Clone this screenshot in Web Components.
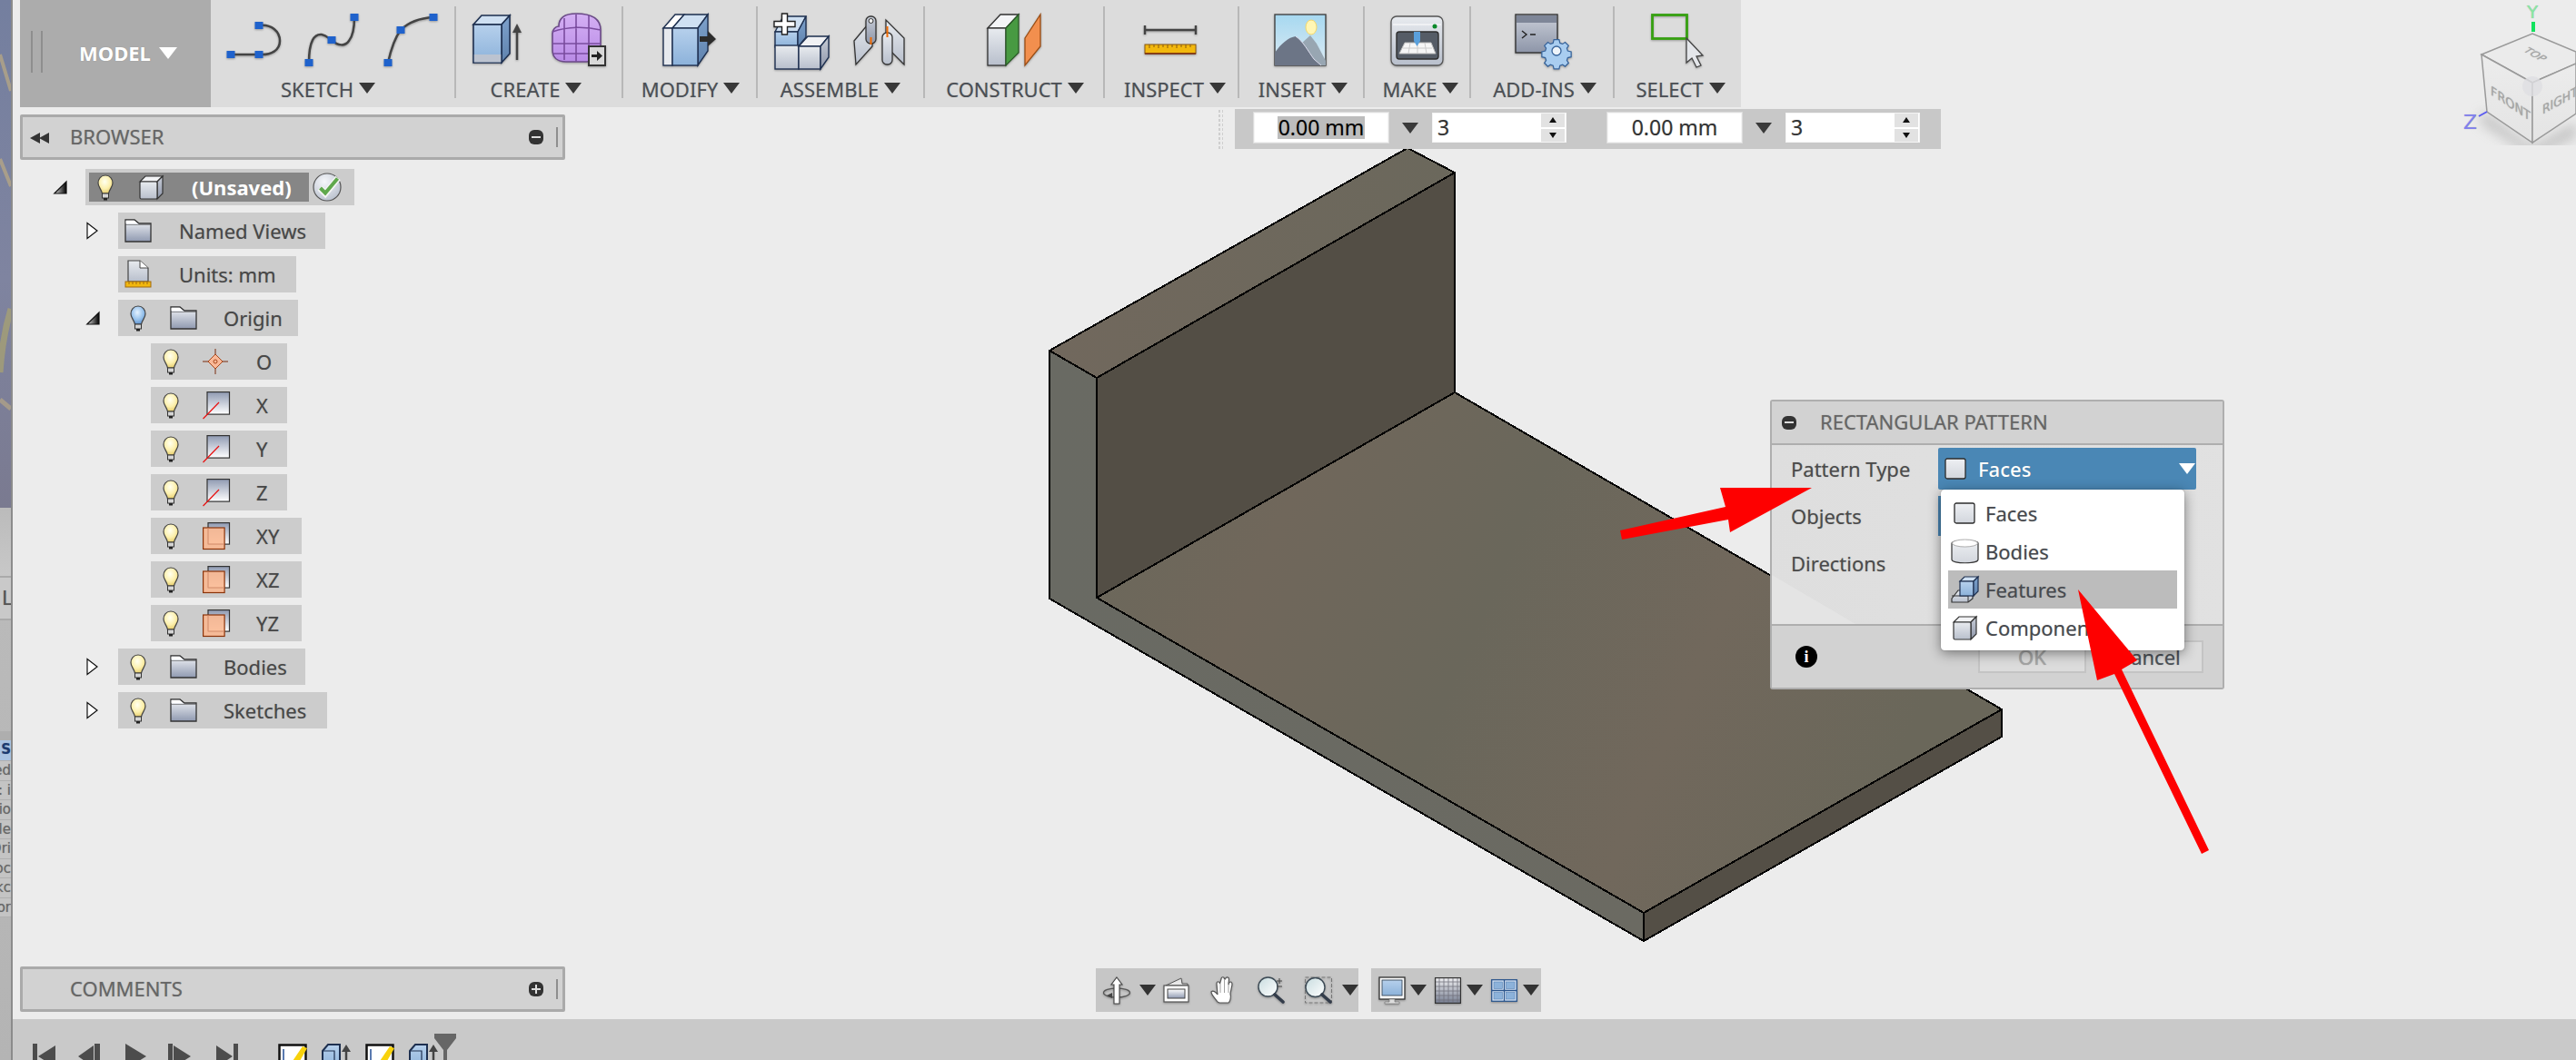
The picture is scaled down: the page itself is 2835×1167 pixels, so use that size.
<!DOCTYPE html>
<html>
<head>
<meta charset="utf-8">
<title>Rectangular pattern</title>
<style>
html, body { margin: 0; height: 100%; background: #ececec; overflow: hidden; }
</style>
</head>
<body>
<fx-app>
  <desktop-strip slot="strip"></desktop-strip>
  <fx-toolbar slot="toolbar">
    <model-switch></model-switch>
    <tool-group label="SKETCH" width="268" shift="-5">
      <fx-icon name="skLine"></fx-icon><fx-icon name="skSpline"></fx-icon><fx-icon name="skArc"></fx-icon>
    </tool-group>
    <tool-sep></tool-sep>
    <tool-group label="CREATE" width="182" shift="-3">
      <fx-icon name="extrude"></fx-icon><fx-icon name="form"></fx-icon>
    </tool-group>
    <tool-sep></tool-sep>
    <tool-group label="MODIFY" width="146" shift="1"><fx-icon name="press"></fx-icon></tool-group>
    <tool-sep></tool-sep>
    <tool-group label="ASSEMBLE" width="182">
      <fx-icon name="newComp"></fx-icon><fx-icon name="joint"></fx-icon>
    </tool-group>
    <tool-sep></tool-sep>
    <tool-group label="CONSTRUCT" width="196" shift="1"><fx-icon name="construct"></fx-icon></tool-group>
    <tool-sep></tool-sep>
    <tool-group label="INSPECT" width="146" shift="4"><fx-icon name="inspect"></fx-icon></tool-group>
    <tool-sep></tool-sep>
    <tool-group label="INSERT" width="136" shift="2"><fx-icon name="insert"></fx-icon></tool-group>
    <tool-sep></tool-sep>
    <tool-group label="MAKE" width="115" shift="4"><fx-icon name="make"></fx-icon></tool-group>
    <tool-sep></tool-sep>
    <tool-group label="ADD-INS" width="156" shift="3"><fx-icon name="addins"></fx-icon></tool-group>
    <tool-sep></tool-sep>
    <tool-group label="SELECT" width="139" shift="3"><fx-icon name="select"></fx-icon></tool-group>
  </fx-toolbar>

  <model-view slot="canvas"></model-view>
  <sketch-bar slot="canvas"></sketch-bar>
  <nav-bar slot="canvas"></nav-bar>
  <pattern-dialog slot="canvas"></pattern-dialog>
  <red-arrows slot="canvas"></red-arrows>

  <side-panel slot="browser" title="BROWSER" kind="collapse">
    <tree-row level="0" expander="open" bulb="yellow" icon="cube" text="(Unsaved)" width="296" root></tree-row>
    <tree-row level="1" expander="closed" icon="folder" text="Named Views" width="228"></tree-row>
    <tree-row level="1" icon="units" text="Units: mm" width="196"></tree-row>
    <tree-row level="1" expander="open" bulb="blue" icon="folder" text="Origin" width="198"></tree-row>
    <tree-row level="2" bulb="yellow" icon="point" text="O" width="150"></tree-row>
    <tree-row level="2" bulb="yellow" icon="axis" text="X" width="150"></tree-row>
    <tree-row level="2" bulb="yellow" icon="axis" text="Y" width="150"></tree-row>
    <tree-row level="2" bulb="yellow" icon="axis" text="Z" width="150"></tree-row>
    <tree-row level="2" bulb="yellow" icon="plane" text="XY" width="166"></tree-row>
    <tree-row level="2" bulb="yellow" icon="plane" text="XZ" width="166"></tree-row>
    <tree-row level="2" bulb="yellow" icon="plane" text="YZ" width="166"></tree-row>
    <tree-row level="1" expander="closed" bulb="yellow" icon="folder" text="Bodies" width="206"></tree-row>
    <tree-row level="1" expander="closed" bulb="yellow" icon="folder" text="Sketches" width="230"></tree-row>
  </side-panel>
  <side-panel slot="comments" title="COMMENTS" kind="expand"></side-panel>

  <time-line slot="timeline"></time-line>
  <view-cube slot="cube"></view-cube>
</fx-app>

<script>
const FONT = `"Noto Sans", "DejaVu Sans", sans-serif`

const DEFS = /* svg */ `<defs>
<linearGradient id="blue" x1="0" y1="0" x2="0" y2="1"><stop offset="0" stop-color="#b6d0ec"/><stop offset="1" stop-color="#8cb2da"/></linearGradient>
<linearGradient id="blueSide" x1="0" y1="0" x2="0" y2="1"><stop offset="0" stop-color="#7ea2cc"/><stop offset="1" stop-color="#5f82ad"/></linearGradient>
<linearGradient id="steel" x1="0" y1="0" x2="0" y2="1"><stop offset="0" stop-color="#e8ebef"/><stop offset="1" stop-color="#b8bfcc"/></linearGradient>
<linearGradient id="steelSide" x1="0" y1="0" x2="0" y2="1"><stop offset="0" stop-color="#c9ced8"/><stop offset="1" stop-color="#8d95a8"/></linearGradient>
<linearGradient id="pale" x1="0" y1="0" x2="0" y2="1"><stop offset="0" stop-color="#eef0f3"/><stop offset="1" stop-color="#d2d6dd"/></linearGradient>
<linearGradient id="folder" x1="0" y1="0" x2="0" y2="1"><stop offset="0" stop-color="#f2f4f7"/><stop offset="1" stop-color="#8f99b0"/></linearGradient>
<linearGradient id="plane" x1="0" y1="0" x2="0" y2="1"><stop offset="0" stop-color="#8f9ab2"/><stop offset="1" stop-color="#ffffff"/></linearGradient>
<linearGradient id="gridFill" x1="0" y1="0" x2="0" y2="1"><stop offset="0" stop-color="#f0f0f2"/><stop offset="1" stop-color="#777f92"/></linearGradient>
<linearGradient id="sky" x1="0" y1="0" x2="0" y2="1"><stop offset="0" stop-color="#a6d8f0"/><stop offset="1" stop-color="#dcebf4"/></linearGradient>
<linearGradient id="mag" x1="0" y1="0" x2="1" y2="1"><stop offset="0" stop-color="#c8dcdf"/><stop offset="1" stop-color="#ffffff"/></linearGradient>
<linearGradient id="purple" x1="0" y1="0" x2="0" y2="1"><stop offset="0" stop-color="#d4b0f4"/><stop offset="1" stop-color="#b98ae6"/></linearGradient>
<radialGradient id="bulb" cx=".45" cy=".35" r=".65"><stop offset="0" stop-color="#fffff0"/><stop offset=".6" stop-color="#fcf0ae"/><stop offset="1" stop-color="#e6cd6e"/></radialGradient>
<radialGradient id="bulbBlue" cx=".45" cy=".35" r=".65"><stop offset="0" stop-color="#e4f2ff"/><stop offset=".6" stop-color="#99c3ec"/><stop offset="1" stop-color="#5f93cf"/></radialGradient>
<radialGradient id="disc" cx=".4" cy=".3" r=".8"><stop offset="0" stop-color="#f6f7fa"/><stop offset="1" stop-color="#b4bcca"/></radialGradient>
</defs>`

const bulbBody = fill => `<path d="M9 1C4 1 1 5 1 9.5 1 13.5 4 15.5 5.5 21h7C14 15.5 17 13.5 17 9.5 17 5 14 1 9 1z" fill="url(#${fill})" stroke="#444" stroke-width="1.2"/>
<rect x="5.5" y="21" width="7" height="5" fill="#d4d4d4" stroke="#333"/><rect x="7" y="26" width="4" height="2.5" fill="#222"/>`

const sq = (x, y) => `<rect x="${x - 4.5}" y="${y - 4}" width="9" height="8" fill="#1f62cc"/>`

const ICONS = {
  skLine: [60, 60, `<path d="M5 45H36M36 13C50 11 59 20 59 30 59 40 50 46 36 45" fill="none" stroke="#444" stroke-width="2.5"/>${sq(5, 45)}${sq(36, 45)}${sq(36, 13)}`],
  skSpline: [60, 60, `<path d="M4 54C4 30 10 22 18 23 24 24 26 28 29 29 36 36 44 36 48 30 53 24 54 14 54 4" fill="none" stroke="#444" stroke-width="2.5"/>${sq(4, 54)}${sq(29, 29)}${sq(54, 4)}`],
  skArc: [60, 60, `<path d="M4 54C8 36 12 26 18 18 26 10 38 5 54 4" fill="none" stroke="#444" stroke-width="2.5"/>${sq(4, 54)}${sq(18, 18)}${sq(54, 4)}`],
  extrude: [60, 60, `<path d="M1 12L10 2H41L32 12z" fill="#cfe0f2" stroke="#1e3050" stroke-width="1.6"/><path d="M32 12L41 2V44L32 54z" fill="url(#blueSide)" stroke="#1e3050" stroke-width="1.6"/>
    <rect x="1" y="12" width="31" height="42" fill="url(#blue)" stroke="#1e3050" stroke-width="1.6"/><rect x="1.8" y="45" width="29.4" height="8.5" fill="#bcc3d0"/>
    <path d="M49 51V20" stroke="#444" stroke-width="2.5"/><path d="M44 21L49 11 54 21z" fill="#444"/>`],
  form: [60, 60, `<path d="M8 14C8 4 16 0 27 0 42 0 54 4 54 18V40C54 50 48 53 38 53H16C6 53 1 48 1 40V22C1 18 4 14 8 14z" fill="url(#purple)" stroke="#6b4a88" stroke-width="1.6"/>
    <path d="M1 20C18 14 38 14 54 18M1 33H54M2 44H52M14 5V51M27 1V53M41 2V52" stroke="#7a4c9e" stroke-width="1.6" fill="none"/>
    <rect x="41" y="36" width="18" height="21" fill="#d8d8d8" stroke="#333" stroke-width="2"/><path d="M44 45H50V41L56 46.500 50 52V48H44z" fill="#222"/>`],
  press: [60, 60, `<path d="M1 16L14 1H24L11 16z" fill="#fff" stroke="#1e3050" stroke-width="1.4"/><rect x="1" y="16" width="10" height="41" fill="#e6e9ee" stroke="#1e3050" stroke-width="1.4"/>
    <path d="M11 16L24 1H50L39 16z" fill="#cfe0f2" stroke="#1e3050" stroke-width="1.4"/><path d="M39 16L50 1V41L39 57z" fill="url(#blueSide)" stroke="#1e3050" stroke-width="1.4"/>
    <rect x="11" y="16" width="28" height="41" fill="url(#blue)" stroke="#1e3050" stroke-width="1.4"/><path d="M41 25H50V19L59 28 50 36V31H41z" fill="#2c2c2c"/>`],
  newComp: [60, 62, `<path d="M1 20L10 3H35L26 20z" fill="#cfe0f2" stroke="#1e3050" stroke-width="1.4"/><rect x="1" y="20" width="25" height="17" fill="url(#blue)" stroke="#1e3050" stroke-width="1.4"/><path d="M26 20L35 3V26L26 37z" fill="url(#blueSide)" stroke="#1e3050" stroke-width="1.4"/>
    <rect x="1" y="35" width="26" height="26" fill="url(#steel)" stroke="#1e3050" stroke-width="1.4"/><path d="M27 36L37 25H60L51 36z" fill="#f0f1f4" stroke="#1e3050" stroke-width="1.4"/><rect x="27" y="36" width="24" height="25" fill="url(#steel)" stroke="#1e3050" stroke-width="1.4"/><path d="M51 36L60 25V48L51 61z" fill="url(#steelSide)" stroke="#1e3050" stroke-width="1.4"/>
    <path d="M8.500 0H14.500V8.500H23V14.500H14.500V23H8.500V14.500H0V8.500H8.500z" fill="#fff" stroke="#222" stroke-width="1.4"/>`],
  joint: [60, 60, `<path d="M1 30L21 6V36L3 56z" fill="url(#steel)" stroke="#333" stroke-width="1.3"/><path d="M56 56L36 36V7L56 27z" fill="url(#steel)" stroke="#333" stroke-width="1.3"/>
    <rect x="14" y="3" width="11" height="30" rx="5" fill="url(#steelSide)" stroke="#333" stroke-width="1.3"/><circle cx="19.500" cy="8" r="2.500" fill="#eee" stroke="#333"/>
    <rect x="32" y="21" width="11" height="35" rx="5" fill="url(#steel)" stroke="#333" stroke-width="1.3"/>
    <path d="M19.500 26V34M37.500 14V26" stroke="#f06a00" stroke-width="2"/>`],
  construct: [60, 60, `<path d="M1 16L15 1H35L21 16z" fill="#f4f5f7" stroke="#333" stroke-width="1.3"/><rect x="1" y="16" width="20" height="41" fill="url(#steel)" stroke="#333" stroke-width="1.3"/><path d="M21 16L35 1V43L21 57z" fill="#489a42" stroke="#2b5a28" stroke-width="1.3"/>
    <path d="M42 27L59 1V36L42 57z" fill="#f28f4e" stroke="#9a4d14" stroke-width="1.3"/>`],
  inspect: [60, 60, `<path d="M1 13V23M1 18H57M57 13V23" fill="none" stroke="#444" stroke-width="2.4"/><rect x="1" y="34" width="56" height="10" fill="#f2b80e" stroke="#8c5a10" stroke-width="1"/><path d="M1 44H57" stroke="#7a2a10" stroke-width="1.6"/>
    <path d="M6 34v4M11 34v3M16 34v4M21 34v3M26 34v4M31 34v3M36 34v4M41 34v3M46 34v4M51 34v3" stroke="#8c5a10" stroke-width="1"/>`],
  insert: [60, 60, `<rect x="1" y="1" width="56" height="56" fill="url(#sky)" stroke="#444" stroke-width="1.4"/><ellipse cx="41" cy="15" rx="6" ry="8" fill="#fff6b4" stroke="#f2d66a"/>
    <path d="M30 33L40 24 47 33 57 52V57H30z" fill="#98a6b2"/><path d="M1 43C8 33 16 26 24 25 32 30 38 42 44 50L52 57H1z" fill="#6c7586"/><path d="M24 25C32 30 38 42 44 50L52 57" fill="none" stroke="#dde" stroke-width="1"/>`],
  make: [60, 60, `<rect x="1" y="3" width="57" height="54" rx="6" fill="url(#steel)" stroke="#555" stroke-width="1.3"/><path d="M3 12H56" stroke="#fff" stroke-width="1"/><circle cx="49" cy="14" r="2.500" fill="#0a8a2a"/>
    <rect x="7" y="20" width="46" height="30" rx="3" fill="#555c66" stroke="#2e2e2e" stroke-width="1.4"/><path d="M10 44L16 32H45L50 44z" fill="#f6f6f6" stroke="#bbb"/><path d="M14 38H46M22 32L20 44M30 32V44M38 32L40 44" stroke="#ccc"/>
    <path d="M26 20H33V30L29.500 36 26 30z" fill="#5aa0dc"/>`],
  addins: [60, 60, `<rect x="1" y="1" width="46" height="42" fill="url(#steelSide)" stroke="#333" stroke-width="1.4"/><rect x="2" y="2" width="44" height="8" fill="#7e8698"/>
    <path d="M8 19L13 23 8 27M17 23H23" fill="none" stroke="#222" stroke-width="1.4"/>
    <g transform="translate(46,41)"><path d="M-3-13h6l1 4 3 1 3-2 4 4-2 3 1 3 4 1v6l-4 1-1 3 2 3-4 4-3-2-3 1-1 4h-6l-1-4-3-1-3 2-4-4 2-3-1-3-4-1v-6l4-1 1-3-2-3 4-4 3 2 3-1z" transform="scale(.95)" fill="#a9cdf0" stroke="#37639a" stroke-width="1.3"/><circle r="5" fill="#eef4fa" stroke="#37639a" stroke-width="1.3"/></g>`],
  select: [60, 60, `<rect x="1.500" y="1.500" width="38" height="26" fill="none" stroke="#36a010" stroke-width="2.8"/><path d="M39 27V54L45 49 50 59 55 57 50 47 57 46z" fill="#e4e6ea" stroke="#444" stroke-width="1.3"/>`],

  bulbYellow: [18, 29, bulbBody('bulb')],
  bulbBlue: [18, 29, bulbBody('bulbBlue')],
  cube: [30, 27, `<path d="M3 7L9 1H28L22 7z" fill="#f2f3f5" stroke="#333" stroke-width="1.200"/><path d="M22 7L28 1V20L22 26z" fill="url(#steelSide)" stroke="#333" stroke-width="1.200"/><rect x="3" y="7" width="19" height="19" rx="1.500" fill="url(#steel)" stroke="#333" stroke-width="1.200"/>`],
  folder: [30, 26, `<path d="M1 4V1H11L16 5H29V25H1z" fill="url(#folder)" stroke="#333" stroke-width="1.300"/><path d="M1.600 5V1.700H10.500L14 5z" fill="#fff"/><path d="M1 6.500H29" stroke="#555" stroke-width=".6"/>`],
  units: [30, 32, `<path d="M4 1H17L26 9V24H4z" fill="url(#steel)" stroke="#444" stroke-width="1.200"/><path d="M17 1V9H26" fill="#fff" stroke="#444"/><rect x="1" y="24" width="28" height="6" fill="#f2b80e" stroke="#a06a10"/><path d="M5 24v3M9 24v3M13 24v3M17 24v3M21 24v3M25 24v3" stroke="#a06a10"/>`],
  point: [30, 28, `<path d="M14 0V28M0 14H28" stroke="#7a2c0e" stroke-width="1"/><path d="M14 6L22 14 14 22 6 14z" fill="#fab998" stroke="#a8481c"/><circle cx="14" cy="14" r="2" fill="none" stroke="#a8481c"/>`],
  axis: [30, 30, `<rect x="5" y="0.600" width="24.500" height="24.500" fill="url(#plane)" stroke="#333" stroke-width="1.200"/><path d="M0.500 30L18 12" stroke="#e81010" stroke-width="1.200"/>`],
  plane: [30, 30, `<rect x="6" y="0.600" width="23.500" height="23.500" fill="url(#plane)" stroke="#333" stroke-width="1.200"/><rect x="0.600" y="6" width="23.500" height="23.500" fill="#fab78f" fill-opacity=".88" stroke="#8a3208" stroke-width="1.200"/><path d="M6 6V24H24" fill="none" stroke="#d99070" stroke-width=".8"/>`],
  check: [32, 32, `<circle cx="16" cy="16" r="15" fill="url(#disc)" stroke="#555" stroke-width="1.200"/><path d="M8 17L14 23 28 6" fill="none" stroke="#f4f4f4" stroke-width="7"/><path d="M8.500 17L14 22.500 27.500 6.500" fill="none" stroke="#5fa84c" stroke-width="4"/>`],

  faceBox: [24, 24, `<rect x="1" y="1" width="22" height="22" rx="2" fill="url(#pale)" stroke="#2c2c2c" stroke-width="1.300"/>`],
  bodies: [31, 30, `<path d="M1 6C1 2 30 2 30 6V24C30 29 1 29 1 24z" fill="url(#pale)" stroke="#333" stroke-width="1.200"/><ellipse cx="15.500" cy="6" rx="14" ry="4" fill="#fff" stroke="#999" stroke-width=".8"/>`],
  feature: [31, 30, `<path d="M1 25L8 16H24V25L19 29H1z" fill="url(#steel)" stroke="#333" stroke-width="1.200"/><path d="M1 22H19V29" fill="none" stroke="#333" stroke-width="1"/><path d="M10 6L15 1H30L25 6z" fill="#cfe0f2" stroke="#1e3050" stroke-width="1.200"/><rect x="10" y="6" width="15" height="16" fill="url(#blue)" stroke="#1e3050" stroke-width="1.200"/><path d="M25 6L30 1V17L25 22z" fill="url(#blueSide)" stroke="#1e3050" stroke-width="1.200"/>`],

  orbit: [30, 30, `<ellipse cx="15" cy="18" rx="14.500" ry="5" fill="none" stroke="#555" stroke-width="1.300"/><path d="M15 1L21 9H18V30H12V9H9z" fill="#fff" stroke="#444" stroke-width="1.100"/><path d="M4 21L10 18V24z" fill="#444"/>`],
  lookAt: [29, 28, `<path d="M3 9L20 1 21 7H27V9z" fill="#e8e8e8" stroke="#555"/><rect x="1" y="9" width="27" height="18" fill="#fff" stroke="#555" stroke-width="1.200"/><rect x="5" y="13" width="19" height="10" fill="url(#plane)" transform="rotate(180 14.500 18)" stroke="#444"/>`],
  hand: [31, 30, `<path d="M8 28C5 24 1 20 1 17 3 15 6 17 8 20L7 8C7 5 10 5 10.500 8L12 3C12 0 15.500 0 15.500 3L16.500 3C17 0 20.500 .5 20.500 3L20 9C21 5 24 5 24 9L22 19C23 22 22 28 20 29H10z" fill="#fff" stroke="#555" stroke-width="1.200"/><path d="M11 8V18M15.500 4V18M20 6V18" stroke="#888" stroke-width=".8"/>`],
  zoom: [30, 30, `<circle cx="11.500" cy="11.500" r="10.500" fill="url(#mag)" stroke="#3c4a55" stroke-width="1.400"/><path d="M19 20L28 28" stroke="#333c4a" stroke-width="3.600" stroke-linecap="round"/><path d="M24 2V8M21 5H27M21 11H27" stroke="#444" stroke-width="1"/>`],
  zoomWin: [30, 30, `<rect x="0.500" y="1" width="29" height="28" fill="none" stroke="#777" stroke-dasharray="4 2"/><circle cx="11.500" cy="12" r="10.500" fill="url(#mag)" stroke="#3c4a55" stroke-width="1.400"/><path d="M19 20L28 28" stroke="#333c4a" stroke-width="3.600" stroke-linecap="round"/>`],
  display: [30, 30, `<rect x="1" y="1" width="28" height="24" fill="#fff" stroke="#333" stroke-width="1.300"/><rect x="4" y="4" width="22" height="17" fill="url(#blue)" stroke="#456"/><path d="M12 25H18V28H23V30H7V28H12z" fill="#ddd" stroke="#777" stroke-width=".7"/>`],
  gridIcon: [29, 29, `<rect x="0.600" y="0.600" width="27.800" height="27.800" fill="url(#gridFill)" stroke="#333" stroke-width="1.200"/><path d="M5 1V28M10 1V28M15 1V28M20 1V28M25 1V28M1 5H28M1 10H28M1 15H28M1 20H28M1 25H28" stroke="#6e6e78" stroke-width=".9" opacity=".85"/>`],
  viewports: [29, 25, `<rect x="0.700" y="0.700" width="27.600" height="23.600" fill="#d4e3f4" stroke="#2b558c" stroke-width="1.300"/><path d="M14.500 1V24M1 12.500H28" stroke="#2b558c" stroke-width="1.300"/><rect x="3" y="3" width="9.500" height="7.500" fill="#8cb2da" stroke="#5a82b4" stroke-width=".6"/><rect x="16.500" y="3" width="9.500" height="7.500" fill="#8cb2da" stroke="#5a82b4" stroke-width=".6"/><rect x="3" y="14.500" width="9.500" height="7.500" fill="#8cb2da" stroke="#5a82b4" stroke-width=".6"/><rect x="16.500" y="14.500" width="9.500" height="7.500" fill="#8cb2da" stroke="#5a82b4" stroke-width=".6"/>`],

  tlSketch: [32, 32, `<rect x="1.500" y="1.500" width="29" height="29" fill="#fff" stroke="#111" stroke-width="2.500"/><path d="M6 6V26" stroke="#5a7ab0" stroke-width="2"/><path d="M14 22L27 3 32 5 20 26z" fill="#f8d20c"/><path d="M14 22L20 26 12 30z" fill="#e8a060"/>`],
  tlExtrude: [32, 32, `<path d="M1 8L7 1H20V28H1z" fill="url(#blue)" stroke="#1e3050" stroke-width="2"/><path d="M1 8H14V28" fill="none" stroke="#1e3050" stroke-width="1.200"/><path d="M27 32V8" stroke="#444" stroke-width="2.500"/><path d="M22 9L27 1 32 9z" fill="#444"/>`],

  expClosed: [14, 20, `<path d="M1 1.500L12 10 1 18.500z" fill="#fff" stroke="#111" stroke-width="1.200"/>`],
  expOpen: [15, 15, `<linearGradient id="exp" x1="0" y1="0" x2="1" y2="0"><stop offset="0" stop-color="#ddd"/><stop offset="1" stop-color="#000"/></linearGradient><path d="M.800 14L14 1V14z" fill="url(#exp)" stroke="#111" stroke-width="1.200"/>`],
}

// small helper so each class is just css + markup
function shadow(el, css, html) {
  const root = el.attachShadow({ mode: 'open' })
  root.innerHTML = `<style>${css}</style>${html}`
  return root
}

class FxIcon extends HTMLElement {
  connectedCallback() {
    if (this.shadowRoot) return
    const [w, h, body] = ICONS[this.getAttribute('name')]
    shadow(this, `:host { display: block; flex: none; width: ${w}px; height: ${h}px; }
      svg { display: block; overflow: visible; }`,
      `<svg width="${w}" height="${h}" viewBox="0 0 ${w} ${h}">${DEFS}${body}</svg>`)
  }
}
customElements.define('fx-icon', FxIcon)

class FxApp extends HTMLElement {
  constructor() {
    super()
    shadow(this, `
      :host { display: flex; width: 2835px; height: 1167px; overflow: hidden; position: relative; font-family: ${FONT}; background: #ececec; color: #4a4a4a; text-shadow: 0 0 1px rgba(70,70,70,.4); }
      #main { flex: 1; display: flex; flex-direction: column; min-width: 0; }
      #canvas { flex: 1; position: relative; display: flex; flex-direction: column; justify-content: space-between; padding: 8px 0 8px 8px; }
      #cube { position: absolute; top: 0; right: 0; }
    `, `
      <slot name="strip"></slot>
      <div id="main">
        <slot name="toolbar"></slot>
        <div id="canvas"><slot name="canvas"></slot><slot name="browser"></slot><slot name="comments"></slot></div>
        <slot name="timeline"></slot>
      </div>
      <div id="cube"><slot name="cube"></slot></div>
    `)
  }
}
customElements.define('fx-app', FxApp)

class DesktopStrip extends HTMLElement {
  constructor() {
    super()
    const rows = ['ed', 's: i', 'tio', 'ele', 'Ori', 'Boc', 'Skc', 'Cor']
    shadow(this, `
      :host { display: flex; flex-direction: column; flex: none; width: 14px; box-sizing: border-box; border-right: 2px solid #8b8b8b; overflow: hidden; font-family: "DejaVu Sans", sans-serif; background: linear-gradient(#c2c2c2, #b4b4b4); }
      svg { display: block; flex: none; }
      .band { height: 75px; flex: none; background: linear-gradient(#bbb, #c8c8c8); }
      .tab { height: 45px; flex: none; border-top: 2px solid #aaa; border-bottom: 2px solid #aaa; background: #c9c9c9; font-size: 22px; line-height: 45px; padding-left: 2px; color: #555; }
      .gap { height: 122px; flex: none; }
      .head { height: 10px; flex: none; background: #aeaeae; }
      .row { height: 21.500px; flex: none; display: flex; justify-content: flex-end; font-size: 15px; line-height: 21px; color: #666; white-space: nowrap; background: #c4c4c4; border-bottom: 1px solid #b0b0b0; box-sizing: border-box; }
      .sel { background: #a9c3e2; color: #1a3a70; font-weight: bold; height: 23px; }
    `, `
      <svg width="12" height="559" viewBox="0 0 12 559">
        <defs><linearGradient id="d" x1="0" y1="0" x2="0" y2="1"><stop offset="0" stop-color="#747f9f"/><stop offset=".55" stop-color="#7f84a0"/><stop offset="1" stop-color="#7a7a90"/></linearGradient></defs>
        <rect width="12" height="559" fill="url(#d)"/>
        <path d="M0 60L12 100M0 175L12 205" stroke="#b5a685" stroke-width="4" opacity=".8"/>
        <path d="M12 340C6 360 2 380 0 410" stroke="#a8a272" stroke-width="7" opacity=".75" fill="none"/>
        <path d="M0 440L12 450" stroke="#b5a685" stroke-width="5" opacity=".7"/>
      </svg>
      <div class="band"></div>
      <div class="tab">L</div>
      <div class="gap"></div>
      <div class="head"></div>
      <div class="row sel"><span>at S</span></div>
      ${rows.map(r => `<div class="row"><span>${r}</span></div>`).join('')}
    `)
  }
}
customElements.define('desktop-strip', DesktopStrip)

class FxToolbar extends HTMLElement {
  constructor() {
    super()
    shadow(this, `:host { display: flex; flex: none; height: 118px; margin-left: 8px; width: 1894px; background: #dcdcdc; }`, `<slot></slot>`)
  }
}
customElements.define('fx-toolbar', FxToolbar)

class ModelSwitch extends HTMLElement {
  constructor() {
    super()
    shadow(this, `
      :host { display: flex; align-items: center; flex: none; width: 210px; height: 118px; background: #acacac; color: #fff; font-weight: bold; font-size: 22px; box-sizing: border-box; padding: 0 0 2px 12px; }
      .grip { width: 9px; height: 46px; border-left: 2px solid #8e8e8e; border-right: 2px solid #8e8e8e; margin-right: 40px; box-sizing: content-box; margin-top: -2px; }
      .arrow { width: 0; height: 0; margin-left: 9px; border-left: 10px solid transparent; border-right: 10px solid transparent; border-top: 13px solid #fff; }
    `, `<div class="grip"></div><span>MODEL</span><div class="arrow"></div>`)
  }
}
customElements.define('model-switch', ModelSwitch)

class ToolSep extends HTMLElement {
  constructor() {
    super()
    shadow(this, `:host { display: block; flex: none; width: 2px; height: 101px; margin-top: 7px; background: #b8b8b8; }`, '')
  }
}
customElements.define('tool-sep', ToolSep)

class ToolGroup extends HTMLElement {
  connectedCallback() {
    if (this.shadowRoot) return
    const shift = +this.getAttribute('shift') || 0
    shadow(this, `
      :host { display: flex; flex-direction: column; flex: none; box-sizing: border-box; width: ${this.getAttribute('width')}px; height: 118px; }
      .icons { display: flex; justify-content: center; gap: 27px; height: 60px; margin-top: 15px; filter: drop-shadow(0 1.500px 1px rgba(0,0,0,.3)); }
      .label { display: flex; justify-content: center; align-items: center; margin-top: 8px; margin-left: ${shift * 2}px; height: 30px; font-size: 22px; color: #4b4f55; white-space: nowrap; }
      .arrow { width: 0; height: 0; margin-left: 6px; margin-bottom: 2px; border-left: 9px solid transparent; border-right: 9px solid transparent; border-top: 12px solid #383838; }
    `, `<div class="icons"><slot></slot></div><div class="label"><span>${this.getAttribute('label')}</span><div class="arrow"></div></div>`)
  }
}
customElements.define('tool-group', ToolGroup)

class SidePanel extends HTMLElement {
  connectedCallback() {
    if (this.shadowRoot) return
    const collapse = this.getAttribute('kind') === 'collapse'
    shadow(this, `
      :host { display: block; flex: none; width: 600px; position: relative; z-index: 2; }
      .head { display: flex; align-items: center; box-sizing: border-box; height: 50px; border: 3px solid #aaaaaa; border-radius: 2px; background: #d2d2d2; font-size: 22px; color: #666; position: relative; }
      .back { position: absolute; left: 8px; top: 17px; }
      .title { position: absolute; left: 52px; top: 5px; line-height: 32px; }
      .pill { position: absolute; left: 557px; top: 14px; width: 16px; height: 16px; border-radius: 6px; background: #333; color: #ddd; }
      .pill::before { content: ''; position: absolute; left: 3px; right: 3px; top: 7px; height: 2px; background: #ddd; }
      .pill.plus::after { content: ''; position: absolute; top: 3px; bottom: 3px; left: 7px; width: 2px; background: #ddd; }
      .grip { position: absolute; left: 587px; top: 11px; width: 2px; height: 22px; background: #8e8e8e; }
      .rows { display: flex; flex-direction: column; gap: 8px; margin-top: ${collapse ? 10 : 0}px; }
    `, `
      <div class="head">
        ${collapse ? `<svg class="back" width="21" height="12" viewBox="0 0 21 12"><path d="M0 6L11 0V12zM10 6L21 0V12z" fill="#333"/></svg>` : ''}
        <div class="title">${this.getAttribute('title')}</div>
        <div class="pill ${collapse ? '' : 'plus'}"></div>
        <div class="grip"></div>
      </div>
      <div class="rows"><slot></slot></div>
    `)
    this.removeAttribute('title')
  }
}
customElements.define('side-panel', SidePanel)

class TreeRow extends HTMLElement {
  connectedCallback() {
    if (this.shadowRoot) return
    const level = +this.getAttribute('level')
    const exp = this.getAttribute('expander')
    const bulb = this.getAttribute('bulb')
    const icon = this.getAttribute('icon')
    const root = this.hasAttribute('root')
    const offset = [37, 73, 109][level]
    const expName = exp === 'open' ? 'expOpen' : 'expClosed'
    shadow(this, `
      :host { display: flex; align-items: center; height: 40px; margin-left: ${offset}px; font-size: 22px; color: #474747; }
      .exp { width: 35px; flex: none; }
      .box { position: relative; display: flex; align-items: center; box-sizing: border-box; width: ${this.getAttribute('width')}px; height: 40px; background: #cccccc; padding-left: ${bulb ? 13 : 7}px; filter: none; }
      .ico { margin-left: ${bulb ? 26 : 0}px; width: 30px; display: flex; justify-content: center; }
      .txt { margin-left: ${bulb ? 29 : 30}px; white-space: nowrap; position: relative; }
      .dark { position: absolute; left: 4px; top: 4px; width: 242px; height: 32px; background: #868686; }
      .root .txt { color: #fff; font-weight: bold; margin-left: 30px; text-shadow: none; }
      .chk { position: absolute; left: 250px; top: 4px; }
      fx-icon { position: relative; }
    `, `
      <div class="exp">${exp ? `<fx-icon name="${expName}"></fx-icon>` : ''}</div>
      <div class="box ${root ? 'root' : ''}">
        ${root ? '<div class="dark"></div>' : ''}
        ${bulb ? `<fx-icon name="${bulb === 'blue' ? 'bulbBlue' : 'bulbYellow'}"></fx-icon>` : ''}
        <div class="ico"><fx-icon name="${icon}"></fx-icon></div>
        <div class="txt">${this.getAttribute('text')}</div>
        ${root ? '<fx-icon class="chk" name="check"></fx-icon>' : ''}
      </div>
    `)
  }
}
customElements.define('tree-row', TreeRow)

class DimField extends HTMLElement {
  connectedCallback() {
    if (this.shadowRoot) return
    const sel = this.hasAttribute('selected')
    shadow(this, `
      :host { display: flex; align-items: center; justify-content: center; flex: none; box-sizing: border-box; width: 148px; height: 33px; background: #fff; border: 1.500px solid #f4f4f4; outline: 1px solid #dcdcdc; font-size: 23px; color: #333; }
      span { padding: 0; line-height: 25px; height: 25px; }
      .sel { background: #bdbdbd; color: #000; padding: 0 1px; }
    `, `<span class="${sel ? 'sel' : ''}">${this.getAttribute('value')}</span>`)
  }
}
customElements.define('dim-field', DimField)

class SpinField extends HTMLElement {
  connectedCallback() {
    if (this.shadowRoot) return
    shadow(this, `
      :host { display: flex; flex: none; box-sizing: border-box; width: 148px; height: 33px; background: #fff; border: 1px solid #f4f4f4; font-size: 23px; color: #333; }
      .val { flex: 1; padding-left: 5px; line-height: 31px; }
      .spin { width: 26px; display: flex; flex-direction: column; gap: 2px; background: #fff; padding-right: 1px; }
      .spin div { flex: 1; background: #e2e2e2; display: flex; align-items: center; justify-content: center; }
      .up { border-left: 4px solid transparent; border-right: 4px solid transparent; border-bottom: 6px solid #111; }
      .dn { border-left: 4px solid transparent; border-right: 4px solid transparent; border-top: 6px solid #111; }
    `, `<div class="val">${this.getAttribute('value')}</div><div class="spin"><div><span class="up"></span></div><div><span class="dn"></span></div></div>`)
  }
}
customElements.define('spin-field', SpinField)

class DropArrow extends HTMLElement {
  constructor() {
    super()
    shadow(this, `
      :host { display: flex; flex: none; width: 48px; justify-content: center; align-items: center; height: 33px; }
      i { width: 0; height: 0; border-left: 9px solid transparent; border-right: 9px solid transparent; border-top: 12px solid #3a3a3a; }
    `, `<i></i>`)
  }
}
customElements.define('drop-arrow', DropArrow)

class SketchBar extends HTMLElement {
  constructor() {
    super()
    shadow(this, `
      :host { position: absolute; left: 1345px; top: 2px; display: flex; box-sizing: border-box; width: 777px; height: 44px; padding: 4px 0 7px 21px; background: #c8c8c8; z-index: 1; }
      :host::before { content: ''; position: absolute; left: -19px; top: 0; bottom: 0; width: 6px; background-image: radial-gradient(#cfcfcf 1.200px, transparent 1.300px); background-size: 4px 5px; }
      .gap { width: 45px; flex: none; }
    `, `<dim-field value="0.00 mm" selected></dim-field><drop-arrow></drop-arrow><spin-field value="3"></spin-field><div class="gap"></div>
        <dim-field value="0.00 mm"></dim-field><drop-arrow></drop-arrow><spin-field value="3"></spin-field>`)
  }
}
customElements.define('sketch-bar', SketchBar)

class NavBar extends HTMLElement {
  constructor() {
    super()
    const arrow = `<i></i>`
    shadow(this, `
      :host { position: absolute; left: 1192px; bottom: 8px; display: flex; gap: 14px; height: 48px; }
      .grp { display: flex; align-items: center; background: #c6c6c6; height: 48px; position: relative; filter: none; }
      fx-icon { filter: drop-shadow(0 1px 1px rgba(0,0,0,.3)); }
      i { display: block; flex: none; width: 0; height: 0; border-left: 9px solid transparent; border-right: 9px solid transparent; border-top: 12px solid #333; }
      .a { width: 289px; padding-left: 8px; box-sizing: border-box; }
      .b { width: 187px; padding-left: 8px; box-sizing: border-box; }
    `, `
      <div class="grp a">
        <fx-icon name="orbit"></fx-icon><span style="width:10px"></span>${arrow}<span style="width:8px"></span>
        <fx-icon name="lookAt"></fx-icon><span style="width:23px"></span>
        <fx-icon name="hand"></fx-icon><span style="width:22px"></span>
        <fx-icon name="zoom"></fx-icon><span style="width:22px"></span>
        <fx-icon name="zoomWin"></fx-icon><span style="width:11px"></span>${arrow}
      </div>
      <div class="grp b">
        <fx-icon name="display"></fx-icon><span style="width:5px"></span>${arrow}<span style="width:9px"></span>
        <fx-icon name="gridIcon"></fx-icon><span style="width:6px"></span>${arrow}<span style="width:9px"></span>
        <fx-icon name="viewports"></fx-icon><span style="width:6px"></span>${arrow}
      </div>
    `)
  }
}
customElements.define('nav-bar', NavBar)

class ModelView extends HTMLElement {
  constructor() {
    super()
    shadow(this, `
      :host { position: absolute; left: 0; top: 0; width: 2821px; height: 1004px; display: block; }
      svg { display: block; }
      polygon { stroke: #000; stroke-width: 2; stroke-linejoin: miter; }
    `, `
      <svg width="2821" height="1004" viewBox="14 118 2821 1004" shape-rendering="crispEdges">
        <defs>
          <linearGradient id="floor" x1="0" y1="0" x2="1" y2=".25">
            <stop offset="0" stop-color="#6a685b"/><stop offset=".25" stop-color="#70675b"/><stop offset=".5" stop-color="#6a675b"/><stop offset=".75" stop-color="#71685c"/><stop offset="1" stop-color="#6a675a"/>
          </linearGradient>
          <linearGradient id="top" x1="1" y1="0" x2="0" y2="0"><stop offset="0" stop-color="#6b685c"/><stop offset="1" stop-color="#71685d"/></linearGradient>
          <linearGradient id="side" x1="0" y1="0" x2="1" y2="0"><stop offset="0" stop-color="#696a63"/><stop offset="1" stop-color="#6b6a62"/></linearGradient>
        </defs>
        <polygon points="1549,163 1601,190 1207,416 1155,386" fill="url(#top)"/>
        <polygon points="1207,416 1601,190 1601,432 1207,658" fill="#534e45"/>
        <polygon points="1155,386 1207,416 1207,658 1809,1005 1809,1036 1155,659" fill="url(#side)"/>
        <polygon points="1207,658 1601,432 2203,781 1809,1005" fill="url(#floor)"/>
        <polygon points="1809,1005 2203,781 2203,811 1809,1036" fill="#544f46"/>
      </svg>
    `)
  }
}
customElements.define('model-view', ModelView)

class PatternDialog extends HTMLElement {
  constructor() {
    super()
    shadow(this, `
      :host { position: absolute; left: 1934px; top: 322px; display: flex; flex-direction: column; box-sizing: border-box; width: 500px; height: 319px; border: 2px solid #aeaeae; border-radius: 3px; background: #dfdfdf; font-size: 22px; color: #4b4b4b; z-index: 1; }
      .head { position: relative; height: 46px; flex: none; background: #d2d2d2; border-bottom: 2px solid #aeaeae; color: #666; line-height: 44px; padding-left: 53px; }
      .pill { position: absolute; left: 11px; top: 16px; width: 16px; height: 15px; border-radius: 6px; background: #333; }
      .pill::before { content: ''; position: absolute; left: 3px; right: 3px; top: 6px; height: 2px; background: #ddd; }
      .body { position: relative; flex: 1; display: flex; flex-direction: column; background: linear-gradient(100deg, #dedede, #e1e1e1); }
      .tri { position: absolute; left: 0; bottom: 0; width: 92px; height: 54px; background: #e4e4e4; clip-path: polygon(0 0, 100% 100%, 0 100%); }
      .row { position: relative; display: flex; align-items: center; height: 52px; padding-left: 21px; }
      .lab { width: 162px; flex: none; }
      .sel { display: flex; align-items: center; box-sizing: border-box; width: 284px; height: 46px; padding-left: 7px; background: #4a87b5; color: #fff; border-radius: 2px; position: relative; }
      .sel span { margin-left: 13px; font-weight: 500; }
      .sel i { position: absolute; right: 1px; top: 17px; border-left: 9px solid transparent; border-right: 9px solid transparent; border-top: 12px solid #fff; }
      .box { width: 270px; height: 44px; border-left: 3px solid #4a87b5; }
      .foot { position: relative; height: 70px; flex: none; display: flex; align-items: center; gap: 10px; box-sizing: border-box; background: #d2d2d2; border-top: 2px solid #aeaeae; padding: 0 21px 0 26px; }
      .info { margin-right: auto; width: 24px; height: 24px; border-radius: 50%; background: #000; color: #fff; font: bold 18px/24px "Liberation Serif", serif; text-align: center; }
      .btn { box-sizing: border-box; width: 119px; height: 36px; border: 2px solid #c4c4c4; background: #dcdcdc; text-align: center; line-height: 32px; color: #4b5158; }
      .btn.off { color: #a4a4a4; }
      .menu { position: absolute; left: 186px; top: 97px; box-sizing: border-box; width: 268px; height: 177px; padding: 5px 8px; background: #fff; border-radius: 4px; box-shadow: 0 3px 14px rgba(0,0,0,.45), 0 0 1px rgba(0,0,0,.6); }
      .item { display: flex; align-items: center; height: 42px; position: relative; color: #46494e; }
      .item.on { background: #bcbcbc; }
      .item .i { width: 30px; margin-left: 3px; display: flex; justify-content: center; flex: none; }
      .item span { margin-left: 8px; white-space: nowrap; }
    `, `
      <div class="head"><div class="pill"></div>RECTANGULAR PATTERN</div>
      <div class="body">
        <div class="tri"></div>
        <div class="row"><div class="lab">Pattern Type</div><div class="sel"><fx-icon name="faceBox"></fx-icon><span>Faces</span><i></i></div></div>
        <div class="row"><div class="lab">Objects</div><div class="box"></div></div>
        <div class="row"><div class="lab">Directions</div></div>
      </div>
      <div class="foot">
        <div class="info">i</div>
        <div class="btn off">OK</div>
        <div class="btn">Cancel</div>
      </div>
      <div class="menu">
        <div class="item"><div class="i"><fx-icon name="faceBox"></fx-icon></div><span>Faces</span></div>
        <div class="item"><div class="i"><fx-icon name="bodies"></fx-icon></div><span>Bodies</span></div>
        <div class="item on"><div class="i"><fx-icon name="feature"></fx-icon></div><span>Features</span></div>
        <div class="item"><div class="i"><fx-icon name="cube"></fx-icon></div><span>Components</span></div>
      </div>
    `)
  }
}
customElements.define('pattern-dialog', PatternDialog)

class RedArrows extends HTMLElement {
  constructor() {
    super()
    shadow(this, `:host { position: absolute; left: 0; top: 0; width: 2821px; height: 1004px; z-index: 3; pointer-events: none; } svg { display: block; }`, `
      <svg width="2821" height="1004" viewBox="14 118 2821 1004">
        <polygon fill="#fe0000" points="1994,537 1893,537 1899,558 1783,584 1785,594 1902,572 1904,586"/>
        <polygon fill="#fe0000" points="2287,649 2352,727 2335,737 2431,936 2423,940 2327,742 2308,749"/>
      </svg>`)
  }
}
customElements.define('red-arrows', RedArrows)

class TimeLine extends HTMLElement {
  constructor() {
    super()
    const c = (d, gap) => `<svg class="ctl" style="margin-right:${gap}px" width="26" height="30" viewBox="0 0 26 30"><path d="${d}" fill="#4c4c4c"/></svg>`
    shadow(this, `
      :host { display: flex; flex: none; height: 45px; background: #c9c9c9; overflow: hidden; position: relative; padding: 27px 0 0 22px; box-sizing: border-box; }
      .ctl { flex: none; display: block; }
      .f { flex: none; margin-right: 16px; }
      .mark { position: absolute; left: 464px; top: 16px; }
    `, `
      ${c('M0 0H5V30H0zM25 2V26L6 14z', 23)}
      ${c('M19 0V30H25V0zM18 2V26L1 14z', 25)}
      ${c('M2 0L25 14 2 28z', 22)}
      ${c('M1 0H6V30H1zM7 2L26 14 7 26z', 27)}
      ${c('M1 2L19 14 1 26zM20 0H25V30H20z', 43)}
      <fx-icon class="f" name="tlSketch"></fx-icon><fx-icon class="f" name="tlExtrude"></fx-icon>
      <fx-icon class="f" name="tlSketch"></fx-icon><fx-icon class="f" name="tlExtrude"></fx-icon>
      <svg class="mark" width="24" height="29" viewBox="0 0 24 29"><path d="M0 0H24V5L14 18V29H10V18L0 5z" fill="#666"/></svg>
    `)
  }
}
customElements.define('time-line', TimeLine)

class ViewCube extends HTMLElement {
  constructor() {
    super()
    shadow(this, `:host { display: block; width: 175px; height: 160px; } svg { display: block; } text { font-family: "DejaVu Sans", sans-serif; }`, `
      <svg width="175" height="160" viewBox="2660 0 175 160">
        <defs>
          <filter id="blur" x="-30%" y="-30%" width="160%" height="160%"><feGaussianBlur stdDeviation="7"/></filter>
          <linearGradient id="face" x1="0" y1="0" x2="0" y2="1"><stop offset="0" stop-color="#ececec"/><stop offset="1" stop-color="#e4e4e4"/></linearGradient>
        </defs>
        <polygon points="2732,122 2787,162 2835,135 2835,150 2787,172 2730,135" fill="#999" opacity=".55" filter="url(#blur)"/>
        <polygon points="2731,60 2787,37 2835,57 2835,70 2787,91" fill="#ebebeb" stroke="#9a9a9a" stroke-width="1.500"/>
        <polygon points="2731,60 2787,91 2787,157 2737,123" fill="url(#face)" stroke="#9a9a9a" stroke-width="1.500"/>
        <polygon points="2787,91 2835,70 2835,125 2787,157" fill="url(#face)" stroke="#9a9a9a" stroke-width="1.500"/>
        <circle cx="2787" cy="95" r="11" fill="#dfdfe2" opacity=".8"/>
        <text transform="matrix(.75,.42,-.72,.42,2776,56)" font-size="14" fill="#a6a6a6">TOP</text>
        <text transform="matrix(.92,.62,0,1,2741,104)" font-size="14" fill="#a6a6a6">FRONT</text>
        <text transform="matrix(.88,-.48,0,1,2798,126)" font-size="14" fill="#a6a6a6">RIGHT</text>
        <rect x="2786" y="24" width="4" height="11" fill="#12e25e"/>
        <text x="2787" y="20" font-size="20" text-anchor="middle" fill="#86e8a2">Y</text>
        <path d="M2728 128L2737 123" stroke="#5a5af0" stroke-width="2"/>
        <text x="2711" y="142" font-size="22" fill="#8080ee">Z</text>
      </svg>`)
  }
}
customElements.define('view-cube', ViewCube)
</script>
</body>
</html>
